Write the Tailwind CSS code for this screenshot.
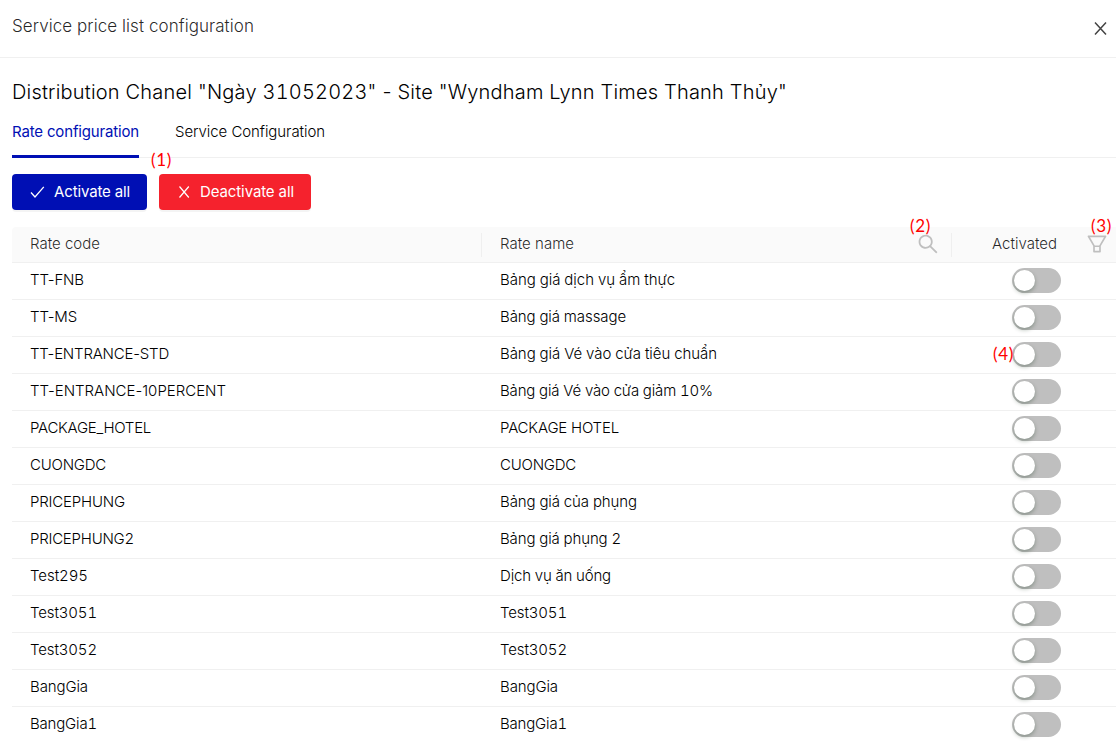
<!DOCTYPE html>
<html lang="en">
<head>
<meta charset="utf-8">
<title>Service price list configuration</title>
<script src="https://cdn.jsdelivr.net/npm/@tailwindcss/browser@4"></script>
</head>
<body class="relative h-[743px] w-[1116px] overflow-hidden bg-white font-['Inter','Noto_Sans',sans-serif] text-[15px] font-light text-black">
<header class="flex h-[58px] items-start justify-between border-b border-[#f0f0f0] pl-3 pr-[6px]">
  <h1 class="mt-[14px] text-[17px] leading-6 text-black/85"><span class="whitespace-nowrap" data-w="242">Service price list configuration</span></h1>
  <svg class="mt-[19px] size-[19px]" viewBox="0 0 19 19" fill="none" stroke="#444" stroke-width="1.5"><path d="M4 3.500 15 15.500M15 3.500 4 15.500"/></svg>
</header>
<main class="pl-3">
  <h2 class="flex h-[60px] items-end pb-[11px] text-xl leading-[30px]"><span class="whitespace-nowrap" data-w="775">Distribution Chanel "Ngày <span class="tabular-nums">31052023</span>" - Site "Wyndham Lynn Times Thanh Thủy"</span></h2>
  <nav class="flex h-10 gap-9 border-b border-[#f0f0f0]">
    <div class="h-10 w-[127px] border-b-3 border-[#000fb4] pt-[2px] font-normal leading-6 text-[#000fb4]"><span class="whitespace-nowrap" data-w="127">Rate configuration</span></div>
    <div class="pt-[2px] leading-6"><span class="whitespace-nowrap" data-w="150">Service Configuration</span></div>
  </nav>
  <div class="mt-4 flex gap-3 font-normal text-white">
    <button class="flex h-9 w-[135px] items-center rounded bg-[#000fb4] pl-[17px] shadow-[0_2px_0_rgba(0,0,0,0.045)]">
      <svg class="mr-2 size-[17px]" viewBox="0 0 17 17" fill="none" stroke="currentColor" stroke-width="1.3"><path d="M2 8.500 6 13 14.800 2.800"/></svg>
      <span class="whitespace-nowrap" data-w="76">Activate all</span>
    </button>
    <button class="flex h-9 w-[152px] items-center rounded bg-[#f5222d] pl-[17px] shadow-[0_2px_0_rgba(0,0,0,0.045)]">
      <svg class="mr-[7px] size-[17px]" viewBox="0 0 17 17" fill="none" stroke="currentColor" stroke-width="1.2"><path d="M3.500 2.500 12.800 13.500M12.800 2.500 3.500 13.500"/></svg>
      <span class="whitespace-nowrap" data-w="94">Deactivate all</span>
    </button>
  </div>
  <section class="mt-[17px]">
    <div class="flex h-9 items-center rounded-tl border-b border-[#f0f0f0] bg-[#fafafa] text-black/85">
      <div class="flex h-6 w-[470px] items-center border-r border-[#efefef] pb-px pl-[18px]"><span class="whitespace-nowrap" data-w="70">Rate code</span></div>
      <div class="flex h-6 w-[470px] items-center justify-between border-r border-[#efefef] pb-px pl-[18px] pr-[11px]"><span class="whitespace-nowrap" data-w="74">Rate name</span>
        <svg class="size-6 fill-[#bfbfbf]" viewBox="0 0 1024 1024"><path d="M909.6 854.5L649.9 594.8C690.2 542.7 712 479 712 412c0-80.2-31.3-155.4-87.9-212.1-56.6-56.7-132-87.9-212.1-87.9s-155.5 31.3-212.1 87.9C143.2 256.5 112 331.8 112 412c0 80.1 31.3 155.5 87.9 212.1C256.5 680.8 331.8 712 412 712c67 0 130.6-21.8 182.7-62l259.7 259.6a8.2 8.2 0 0 0 11.6 0l43.6-43.5a8.2 8.2 0 0 0 0-11.6zM570.400 570.400C528 612.700 471.800 636 412 636s-116-23.300-158.400-65.600C211.300 528 188 471.800 188 412s23.300-116.100 65.600-158.400C296 211.300 352.200 188 412 188s116.100 23.200 158.400 65.600S636 352.200 636 412s-23.300 116.100-65.600 158.400z"/></svg>
      </div>
      <div class="flex h-6 flex-1 items-center justify-between pb-px pl-10 pr-[7px]"><span class="whitespace-nowrap" data-w="65">Activated</span>
        <svg class="size-6 fill-[#bfbfbf]" viewBox="0 0 1024 1024"><path d="M880.1 154H143.900c-24.500 0-39.800 26.700-27.500 48L349 597.400V838c0 17.700 14.200 32 31.800 32h262.400c17.600 0 31.800-14.300 31.800-32V597.400L907.700 202c12.200-21.300-3.100-48-27.600-48zM603.400 798H420.600V642h182.900v156zm9.600-236.600l-9.500 16.600h-183l-9.500-16.600L212.700 226h598.600L613 561.400z"/></svg>
      </div>
    </div>
    <div id="rows"></div>
  </section>
</main>
<div class="absolute left-[151px] top-[150px] font-['Lato',sans-serif] text-[17px] leading-5 font-normal text-[#f00]"><span class="whitespace-nowrap" data-w="21">(1)</span></div>
<div class="absolute left-[910px] top-[216px] font-['Lato',sans-serif] text-[17px] leading-5 font-normal text-[#f00]"><span class="whitespace-nowrap" data-w="21">(2)</span></div>
<div class="absolute left-[1091px] top-[216px] font-['Lato',sans-serif] text-[17px] leading-5 font-normal text-[#f00]"><span class="whitespace-nowrap" data-w="21">(3)</span></div>
<div class="absolute left-[993px] top-[344px] font-['Lato',sans-serif] text-[17px] leading-5 font-normal text-[#f00]"><span class="whitespace-nowrap" data-w="21">(4)</span></div>
<script>
const rows = [
  ['TT-FNB', 54, 'Bảng giá dịch vụ ẩm thực', 175],
  ['TT-MS', 47, 'Bảng giá massage', 126],
  ['TT-ENTRANCE-STD', 139, 'Bảng giá Vé vào cửa tiêu chuẩn', 217],
  ['TT-ENTRANCE-10PERCENT', 196, 'Bảng giá Vé vào cửa giảm 10%', 213],
  ['PACKAGE_HOTEL', 121, 'PACKAGE HOTEL', 119],
  ['CUONGDC', 76, 'CUONGDC', 76],
  ['PRICEPHUNG', 95, 'Bảng giá của phụng', 137],
  ['PRICEPHUNG2', 104, 'Bảng giá phụng 2', 121],
  ['Test295', 58, 'Dịch vụ ăn uống', 111],
  ['Test3051', 67, 'Test3051', 67],
  ['Test3052', 67, 'Test3052', 67],
  ['BangGia', 58, 'BangGia', 58],
  ['BangGia1', 67, 'BangGia1', 67]
];
document.getElementById('rows').innerHTML = rows.map(([code, cw, name, nw]) => `
  <div class="flex h-[37px] items-center border-b border-[#f0f0f0]">
    <div class="w-[470px] pb-[2px] pl-[18px]"><span class="whitespace-nowrap ${code.includes('-') ? '' : 'tabular-nums'}" data-w="${cw}">${code}</span></div>
    <div class="w-[470px] pb-[2px] pl-[18px]"><span class="whitespace-nowrap tabular-nums" data-w="${nw}">${name}</span></div>
    <div class="pb-px pl-[60px]"><div class="h-[25px] w-[49px] rounded-full bg-[#bfbfbf] p-[2px]"><div class="size-[21px] rounded-full bg-white shadow-[0_2px_4px_rgba(0,35,11,0.3)]"></div></div></div>
  </div>`).join('');
function fit() {
  document.querySelectorAll('[data-w]').forEach(el => {
    el.style.letterSpacing = '0px';
    const w = el.getBoundingClientRect().width;
    el.style.letterSpacing = ((+el.dataset.w - w) / el.textContent.length) + 'px';
  });
}
document.fonts.ready.then(() => requestAnimationFrame(fit));
window.addEventListener('load', fit);
</script>
</body>
</html>
